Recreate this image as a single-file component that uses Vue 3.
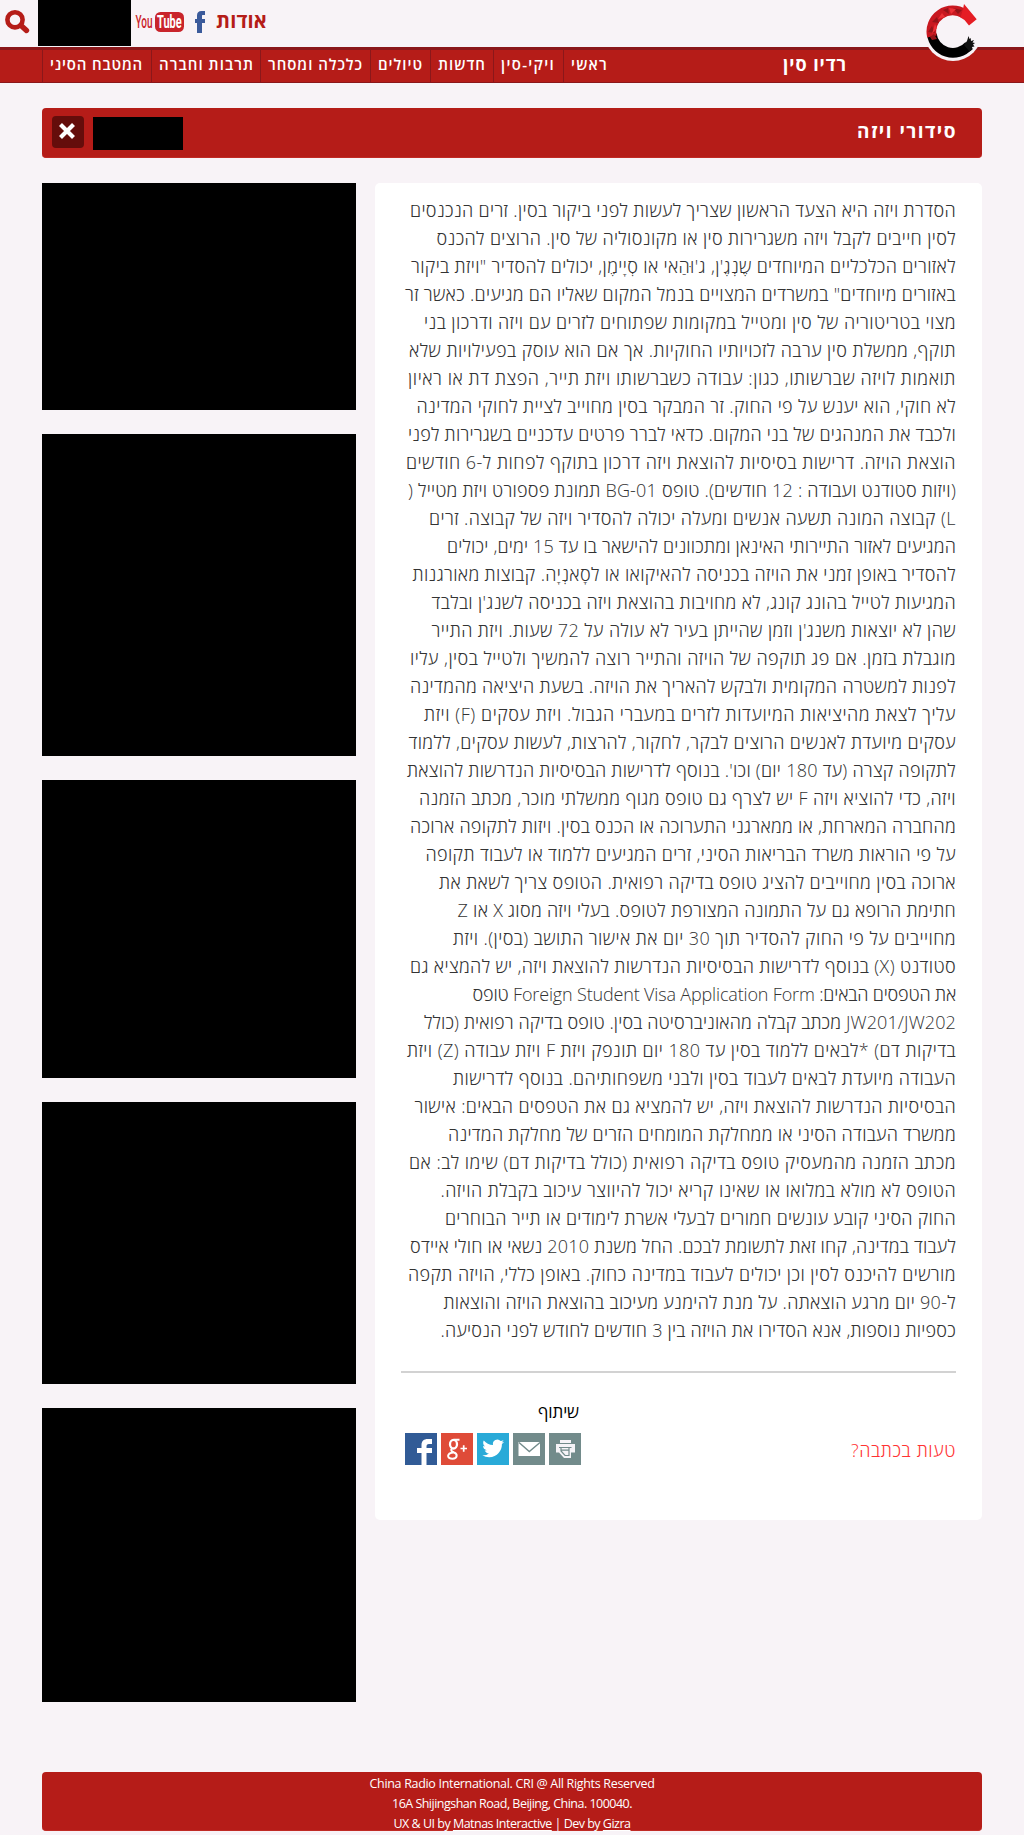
<script setup>
const nav = [
  { t: 'המטבח הסיני', w: 93, box: 109 },
  { t: 'תרבות וחברה', w: 95, box: 109 },
  { t: 'כלכלה ומסחר', w: 95, box: 110 },
  { t: 'טיולים', w: 45, box: 60 },
  { t: 'חדשות', w: 48, box: 63 },
  { t: 'ויקי-סין', w: 54, box: 70 },
  { t: 'ראשי', w: 37, box: 60 },
]
const lines = [
  ['הסדרת ויזה היא הצעד הראשון שצריך לעשות לפני ביקור בסין. זרים הנכנסים', 546],
  ['לסין חייבים לקבל ויזה משגרירות סין או מקונסוליה של סין. הרוצים להכנס', 519.5],
  ["לאזורים הכלכליים המיוחדים שֶנְגֶ'ן, ג'וּהַאי או סְיָימֶן, יכולים להסדיר \"ויזת ביקור", 545],
  ['באזורים מיוחדים" במשרדים המצויים בנמל המקום שאליו הם מגיעים. כאשר זר', 551],
  ['מצוי בטריטוריה של סין ומטייל במקומות שפתוחים לזרים עם ויזה ודרכון בני', 532],
  ['תוקף, ממשלת סין ערבה לזכויותיו החוקיות. אך אם הוא עוסק בפעילויות שלא', 547],
  ['תואמות לויזה שברשותו, כגון: עבודה כשברשותו ויזת תייר, הפצת דת או ראיון', 548],
  ['לא חוקי, הוא יענש על פי החוק. זר המבקר בסין מחוייב לציית לחוקי המדינה', 539.5],
  ['ולכבד את המנהגים של בני המקום. כדאי לברר פרטים עדכניים בשגרירות לפני', 548],
  ['הוצאת הויזה. דרישות בסיסיות להוצאת ויזה דרכון בתוקף לפחות ל-6 חודשים', 550],
  ['(ויזות סטודנט ועבודה : 12 חודשים). טופס BG-01 תמונת פספורט ויזת מטייל (', 548],
  ['L) קבוצה המונה תשעה אנשים ומעלה יכולה להסדיר ויזה של קבוצה. זרים', 527],
  ['המגיעים לאזור התיירותי האינאן ומתכוונים להישאר בו עד 15 ימים, יכולים', 509],
  ['להסדיר באופן זמני את הויזה בכניסה להאיקואו או לסָאנְיָה. קבוצות מאורגנות', 543.5],
  ["המגיעות לטייל בהונג קונג, לא מחויבות בהוצאת ויזה בכניסה לשנג'ן ובלבד", 524.5],
  ["שהן לא יוצאות משנג'ן וזמן שהייתן בעיר לא עולה על 72 שעות. ויזת התייר", 524.5],
  ['מוגבלת בזמן. אם פג תוקפה של הויזה והתייר רוצה להמשיך ולטייל בסין, עליו', 546],
  ['לפנות למשטרה המקומית ולבקש להאריך את הויזה. בשעת היציאה מהמדינה', 546],
  ['עליך לצאת מהיציאות המיועדות לזרים במעברי הגבול. ויזת עסקים (F) ויזת', 532],
  ['עסקים מיועדת לאנשים הרוצים לבקר, לחקור, להרצות, לעשות עסקים, ללמוד', 547.5],
  ["לתקופה קצרה (עד 180 יום) וכו'. בנוסף לדרישות הבסיסיות הנדרשות להוצאת", 549],
  ['ויזה, כדי להוציא ויזה F יש לצרף גם טופס מגוף ממשלתי מוכר, מכתב הזמנה', 537],
  ['מהחברה המארחת, או ממארגני התערוכה או הכנס בסין. ויזות לתקופה ארוכה', 546],
  ['על פי הוראות משרד הבריאות הסיני, זרים המגיעים ללמוד או לעבוד תקופה', 530.5],
  ['ארוכה בסין מחוייבים להציג טופס בדיקה רפואית. הטופס צריך לשאת את', 517],
  ['חתימת הרופא גם על התמונה המצורפת לטופס. בעלי ויזה מסוג X או Z', 498.5],
  ['מחוייבים על פי החוק להסדיר תוך 30 יום את אישור התושב (בסין). ויזת', 503],
  ['סטודנט (X) בנוסף לדרישות הבסיסיות הנדרשות להוצאת ויזה, יש להמציא גם', 546],
  ['את הטפסים הבאים: Foreign Student Visa Application Form טופס', 483.5],
  ['JW201/JW202 מכתב קבלה מהאוניברסיטה בסין. טופס בדיקה רפואית (כולל', 532],
  ['בדיקות דם) *לבאים ללמוד בסין עד 180 יום תונפק ויזת F ויזת עבודה (Z) ויזת', 549],
  ['העבודה מיועדת לבאים לעבוד בסין ולבני משפחותיהם. בנוסף לדרישות', 503],
  ['הבסיסיות הנדרשות להוצאת ויזה, יש להמציא גם את הטפסים הבאים: אישור', 541.5],
  ['ממשרד העבודה הסיני או ממחלקת המומחים הזרים של מחלקת המדינה', 508],
  ['מכתב הזמנה מהמעסיק טופס בדיקה רפואית (כולל בדיקות דם) שימו לב: אם', 547],
  ['הטופס לא מולא במלואו או שאינו קריא יכול להיווצר עיכוב בקבלת הויזה.', 515.5],
  ['החוק הסיני קובע עונשים חמורים לבעלי אשרת לימודים או תייר הבוחרים', 511],
  ['לעבוד במדינה, קחו זאת לתשומת לבכם. החל משנת 2010 נשאי או חולי איידס', 546],
  ['מורשים להיכנס לסין וכן יכולים לעבוד במדינה כחוק. באופן כללי, הויזה תקפה', 548],
  ['ל-90 יום מרגע הוצאתה. על מנת להימנע מעיכוב בהוצאת הויזה והוצאות', 512.5],
  ['כספיות נוספות, אנא הסדירו את הויזה בין 3 חודשים לחודש לפני הנסיעה.', 515.5],
]
const blocks = [227, 322, 298, 282, 294]

// Tracks a single-line label so that it fills the given width.
const vFit = {
  mounted(el, { value }) {
    const base = el.getBoundingClientRect().width
    el.style.letterSpacing = '1px'
    const step = el.getBoundingClientRect().width - base
    el.style.letterSpacing = step ? `${(value - base) / step}px` : '0'
  },
}
</script>

<template>
  <div class="page">
    <header>
      <div class="top">
        <svg class="search" width="26" height="26" viewBox="0 0 26 26"><circle cx="10" cy="10.800" r="7.6" fill="none" stroke="#b51c18" stroke-width="4.6" /><path d="M16 16.500l5.500 5" stroke="#b51c18" stroke-width="5.4" stroke-linecap="round" /></svg>
        <div class="box"></div>
        <svg class="yt" width="50" height="22" viewBox="0 0 50 22">
          <rect x="20" y="1" width="29" height="20" rx="5.5" fill="#c9242b" />
          <text transform="translate(.5 17) scale(1 1.8)" fill="#c9242b" font-size="10" font-weight="500">You</text>
          <text transform="translate(22 17) scale(1.100 1.8)" fill="#fff" font-size="10" font-weight="700">Tube</text>
        </svg>
        <svg class="fb" width="11" height="22" viewBox="0 0 11 22"><path d="M2 22V12H0V8h2V4.500C2 1.500 3.500 0 6.500 0H10v4H8C7 4 7 4.500 7 5.300V8h3V12H7v10z" fill="#3b5a9b" /></svg>
        <b class="about" dir="rtl"><span v-fit="51">אודות</span></b>
      </div>
      <div class="bar">
        <nav>
          <a v-for="n in nav" :key="n.t" :style="{ width: n.box + 'px' }"><span v-fit="n.w" dir="rtl">{{ n.t }}</span></a>
        </nav>
        <b class="brand"><span v-fit="64" dir="rtl">רדיו סין</span></b>
      </div>
      <svg class="logo" width="56" height="60" viewBox="0 0 56 60">
        <circle cx="27" cy="29" r="29" fill="#f8f3f7" />
        <path d="M5.800 31A21.300 21.300 0 0 0 43 42.500" fill="none" stroke="#000" stroke-width="9.700" />
        <path d="M38 42l3-4 1.500-5 1 3 1.200-1 .3 3 3-1-1.500 2.500 2.500.5-2 1.500 1.500 2-2.500.5.500 2.500-3 2z" fill="#111" />
        <path d="M5.900 33.500A21.300 21.300 0 0 1 38.500 11" fill="none" stroke="#c81820" stroke-width="9.700" />
        <path d="M38 1L50.700 16.300 43 22.500 38.500 17 34.500 14.500 37 6z" fill="#e51d24" />
        <path d="M2 29l4-6 3 7zM6 19l5-5 2 6zM17 7l5-2 1 6zM27 5l5 6 4-4zM4 34l4-3 3 5-5 1z" fill="#951419" />
        <path d="M6 31l5-6-2-4zM12 16l4-6 3 4zM23 5l2 6 5-5z" fill="#ed3036" />
      </svg>
    </header>

    <div class="title">
      <div class="close"><svg width="18" height="18" viewBox="0 0 18 18"><path d="M2.500 2.500l13 13M15.500 2.500l-13 13" stroke="#fff" stroke-width="4.200" /></svg></div>
      <div class="tbox"></div>
      <h1><span v-fit="100" dir="rtl">סידורי ויזה</span></h1>
    </div>

    <div class="cols">
      <aside><div v-for="(h, i) in blocks" :key="i" class="block" :style="{ height: h + 'px' }"></div></aside>
      <main>
        <div class="text" dir="rtl">
          <div v-for="(l, i) in lines" :key="i" class="line"><span v-fit="l[1]">{{ l[0] }}</span></div>
        </div>
        <hr />
        <div class="share">
          <div class="social">
            <div class="stitle" dir="rtl"><span v-fit="41">שיתוף</span></div>
            <div class="icons">
              <svg viewBox="0 0 32 32"><rect width="32" height="32" fill="#315b96" /><path d="M16.500 32V20H12v-5h4.500v-3C16.500 8 19 6 22.500 6H27v5h-3c-2 0-2.500 1-2.500 2.500V15H27v5h-5.500v12z" fill="#fff" /></svg>
              <svg viewBox="0 0 32 32"><rect width="32" height="32" fill="#df4b38" /><g fill="none" stroke="#fff"><ellipse cx="12.500" cy="11.200" rx="3.500" ry="4.300" stroke-width="2.300" /><path d="M13 6.800h5.500M11 15.500c-2 2 0 3 2 4 4 1.500 3.500 6-1.500 6.200-6 0-6-5.500 1-6.200" stroke-width="2" /><path d="M19.500 15.500h6.500M22.700 12.300v6.500" stroke-width="1.700" /></g></svg>
              <svg viewBox="0 0 32 32"><rect width="32" height="32" fill="#29aad8" /><path transform="translate(5.300 4.500) scale(.91)" d="M23.950 4.570a10 10 0 0 1-2.820.77 4.960 4.960 0 0 0 2.160-2.720c-.95.550-2 .950-3.130 1.180a4.920 4.920 0 0 0-8.380 4.480C7.690 8.090 4.070 6.130 1.640 3.160a4.820 4.820 0 0 0-.67 2.480c0 1.710.87 3.210 2.190 4.100a4.900 4.900 0 0 1-2.230-.62v.06a4.920 4.920 0 0 0 3.950 4.830 5 5 0 0 1-2.210.08 4.940 4.940 0 0 0 4.600 3.420A9.870 9.870 0 0 1 0 19.540a13.990 13.990 0 0 0 7.560 2.210c9.050 0 14-7.500 14-13.980l-.02-.64A9.900 9.900 0 0 0 23.950 4.570z" fill="#fff" /></svg>
              <svg viewBox="0 0 32 32"><rect width="32" height="32" fill="#728b8b" /><path d="M5.500 9H27v14H5.500z" fill="#fff" /><path d="M6 9.500l10.300 9L27 9.500" fill="none" stroke="#728b8b" stroke-width="1.400" /></svg>
              <svg viewBox="0 0 32 32"><rect width="32" height="32" fill="#728b8b" /><path d="M11 7h11v3H11zM7 11h19v8.500h-4V25h-7l-5-5.500H7z" fill="#f5f3f7" /><path d="M10 14.500h12.500M12.500 17.200h7.500M12 15v3l4 4.500h4V15" fill="none" stroke="#728b8b" stroke-width="1.200" /></svg>
            </div>
          </div>
          <a class="err" dir="rtl"><span v-fit="105">טעות בכתבה?</span></a>
        </div>
      </main>
    </div>

    <footer>
      <div><span v-fit="285">China Radio International. CRI @ All Rights Reserved</span></div>
      <div><span v-fit="240">16A Shijingshan Road, Beijing, China. 100040.</span></div>
      <div><span v-fit="237">UX &amp; UI by <u>Matnas Interactive</u> | Dev by <u>Gizra</u></span></div>
    </footer>
  </div>
</template>

<style>
body { background: #f8f3f7; }
</style>

<style scoped>
.page { width: 1024px; height: 1835px; overflow: hidden; background: #f8f3f7; font-family: "Open Sans", "Liberation Sans", sans-serif; }
.page * { box-sizing: border-box; }
span { display: inline-block; white-space: nowrap; }
header { position: relative; height: 83px; }
.top { display: flex; align-items: flex-start; height: 47px; }
.search { margin: 9px 7px 0 5px; flex: none; }
.box { width: 93px; height: 46px; background: #000; }
.yt { margin: 11px 10px 0 4px; font-family: "Roboto", sans-serif; }
.fb { margin-top: 11px; }
.about { margin: 6px 0 0 10px; font-size: 20px; line-height: 30px; color: #b51c18; }
.bar { display: flex; height: 36px; padding-left: 42px; background: #b51c18; border-top: 3px solid #8b171a; border-bottom: 1px solid #8b171a; color: #fff; }
nav { display: flex; }
nav a { border-left: 1px solid #8b171a; padding-left: 7px; font-size: 15px; font-weight: 600; line-height: 29px; }
.brand { margin-left: 160px; font-size: 18px; line-height: 29px; }
.logo { position: absolute; left: 926px; top: 3px; }
.title { display: flex; align-items: flex-start; height: 50px; margin: 25px 42px 0; padding: 8px 25px 0 10px; border-radius: 4px; background: #b51c18; border-bottom: 1px solid #c02a25; color: #fff; }
.close { display: flex; align-items: center; justify-content: center; width: 32px; height: 32px; border-radius: 4px; background: #650d0b; padding: 0 2px 2px 0; }
.tbox { width: 90px; height: 33px; margin: 1px 0 0 9px; background: #000; }
h1 { margin: 0 0 0 auto; font-size: 19px; line-height: 30px; }
.cols { display: flex; gap: 19px; margin: 25px 42px 0; align-items: flex-start; }
aside { width: 314px; display: flex; flex-direction: column; gap: 24px; }
.block { background: #000; }
main { width: 607px; height: 1337px; border-radius: 5px; background: #fff; padding: 13px 26px 0; }
.text { font-size: 18px; font-weight: 300; color: #333; }
.line { height: 28px; line-height: 28px; white-space: nowrap; }
hr { height: 2px; margin: 27px 0 0; border: 0; background: #d2d2d2; }
.share { display: flex; justify-content: space-between; }
.social { width: 178px; padding: 26px 0 0 4px; }
.stitle { height: 34px; font-size: 17px; line-height: 26px; color: #000; }
.icons { display: flex; gap: 4px; }
.icons svg { width: 32px; height: 32px; flex: none; display: block; }
.err { margin-top: 63px; font-size: 18px; font-weight: 300; line-height: 28px; color: #f33; }
footer { height: 59px; margin: 70px 42px 0; padding-top: 2px; border-radius: 4px; background: #b51c18; border-bottom: 1px solid #c02a25; color: #fff; font-size: 12.5px; text-align: center; }
footer div { height: 20px; line-height: 20px; }
u { text-underline-offset: 2px; }
</style>
